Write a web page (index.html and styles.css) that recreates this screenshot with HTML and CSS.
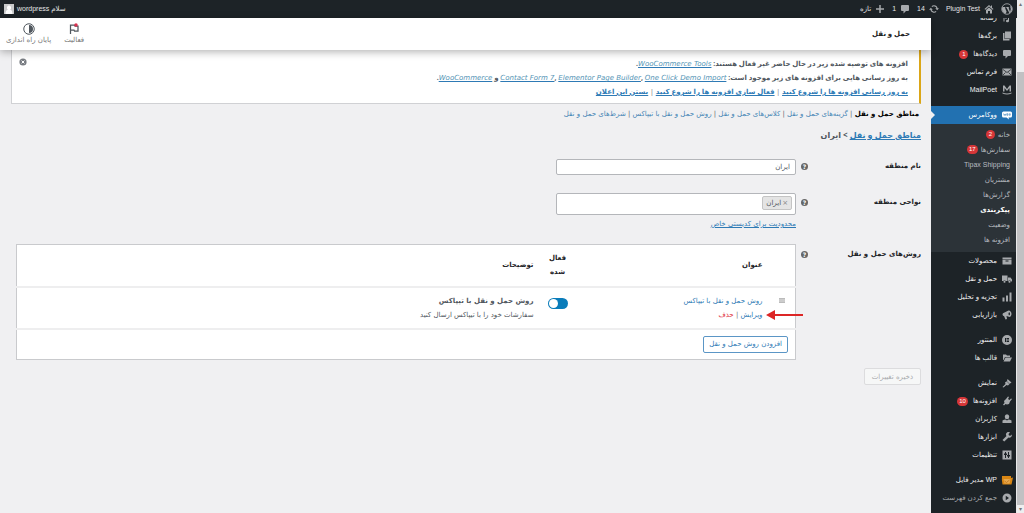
FILE: index.html
```html
<!DOCTYPE html>
<html lang="fa" dir="rtl">
<head>
<meta charset="utf-8">
<title>حمل و نقل</title>
<link rel="stylesheet" href="styles.css">
</head>
<body>
<div class="screen">
  <div class="scrollbar" aria-hidden="true"><span class="sb-arrow">▴</span><span class="sb-thumb"></span><span class="sb-arrow">▾</span></div>
  <div class="app">
    <header class="adminbar">
      <svg class="ic logo" viewBox="0 0 20 20"><circle cx="10" cy="10" r="8.8" fill="none" stroke="currentColor" stroke-width="1.4"/><path d="M2.500 6.500h5v1H6.600l2.600 7.500 1.300-4-1.200-3.500h-1v-1h5.200v1h-1l2.500 7.500 1.200-4c.6-2-.6-3-.9-4.200-.2-1 .5-1.800 1.400-1.800A8 8 0 0 1 14 17.200L10.600 10 8 17.800A8 8 0 0 1 2.500 6.500z"/></svg>
      <a href="#" class="site"><svg class="ic" viewBox="0 0 20 20"><path d="M10 2 1 10l1.500 1.500L10 5l7.500 6.500L19 10l-3-2.700V3h-2v2.500zM4 12v7h4v-5h4v5h4v-7l-6-5z"/></svg>Plugin Test</a>
      <a href="#"><svg class="ic" viewBox="0 0 20 20"><path d="M10 2.500a7.500 7.500 0 0 1 7.300 5.800H20l-3.700 4.200-3.800-4.200h2.400A5.200 5.200 0 0 0 6.500 6L5 4.300a7.500 7.500 0 0 1 5-1.800zM3.700 7.500 7.500 11.700H5.100A5.200 5.200 0 0 0 13.500 14l1.500 1.700A7.500 7.500 0 0 1 2.700 11.700H0z"/></svg>14</a>
      <a href="#"><svg class="ic" viewBox="0 0 20 20"><path d="M4 2h12a2 2 0 0 1 2 2v8a2 2 0 0 1-2 2h-4l-5 5v-5H4a2 2 0 0 1-2-2V4a2 2 0 0 1 2-2z"/></svg>1</a>
      <a href="#"><svg class="ic" viewBox="0 0 20 20"><path d="M8.500 2h3v6.500H18v3h-6.500V18h-3v-6.500H2v-3h6.500z"/></svg>تازه</a>
      <a href="#" class="user">سلام wordpress<svg class="avatar" viewBox="0 0 10 10"><path fill="#c9cacb" d="M0 0h10v10H0z"/><path fill="#fff" d="M5 1.500a2 2.300 0 0 1 1.200 4.200C8 6.200 8.500 7.500 8.500 10h-7c0-2.500.5-3.800 2.300-4.300A2 2.300 0 0 1 5 1.500z"/></svg></a>
    </header>
    <div class="body">
      <nav class="sidebar">
        <ul class="menu">
          <li><a href="#"><svg class="ic" viewBox="0 0 20 20"><path d="M2 3h8v8H2zM12 6h6v2h-4v8a3 2.500 0 1 1-2-2.400zM3 12h2v5H3z"/></svg>رسانه</a></li>
          <li><a href="#"><svg class="ic" viewBox="0 0 20 20"><path d="M6 1h12v14H6zM2 4h3v12h10v3H2z"/></svg>برگه‌ها</a></li>
          <li><a href="#"><svg class="ic" viewBox="0 0 20 20"><path d="M4 2h12a2 2 0 0 1 2 2v8a2 2 0 0 1-2 2h-4l-5 5v-5H4a2 2 0 0 1-2-2V4a2 2 0 0 1 2-2z"/></svg>دیدگاه‌ها<span class="count">1</span></a></li>
          <li><a href="#"><svg class="ic" viewBox="0 0 20 20"><path d="M1 3h18v14H1z"/><path d="m2 5 8 6 8-6M2 16l5-5m11 5-5-5" fill="none" stroke="#1d2327" stroke-width="1.500"/></svg>فرم تماس</a></li>
          <li><a href="#"><svg class="ic" viewBox="0 0 20 20"><path d="M2 13V1h3l5 7 5-7h3v12h-3V6l-5 6-5-6v7zM1 15q9 4 18 0v2q-9 4-18 0z"/></svg>MailPoet</a></li>
          <li class="gap current"><a href="#"><svg class="ic" viewBox="0 0 20 20"><path d="M3 3h14a3 3 0 0 1 3 3v6a3 3 0 0 1-3 3h-4l1 4-5-4H3a3 3 0 0 1-3-3V6a3 3 0 0 1 3-3z"/><path d="m3 7 1.500 4L6 8l1.500 3L8.500 7M10 7.500h2v3h-2zM14.500 7.500h2v3h-2z" fill="none" stroke="#2271b1"/></svg>ووکامرس</a>
            <ul class="submenu">
              <li><a href="#">خانه<span class="count">2</span></a></li>
              <li><a href="#">سفارش‌ها<span class="count">17</span></a></li>
              <li><a href="#">Tipax Shipping</a></li>
              <li><a href="#">مشتریان</a></li>
              <li><a href="#">گزارش‌ها</a></li>
              <li><a href="#" class="on">پیکربندی</a></li>
              <li><a href="#">وضعیت</a></li>
              <li><a href="#">افزونه ها</a></li>
            </ul>
          </li>
          <li><a href="#"><svg class="ic" viewBox="0 0 20 20"><path d="M1 3h18v4H1zM1 8h18v9H1zm6 1v2h6V9z" fill-rule="evenodd"/></svg>محصولات</a></li>
          <li><a href="#"><svg class="ic" viewBox="0 0 20 20"><path d="M0 3h11v11H0zM12 7h5l3 4v4h-8z"/><circle cx="5" cy="15.500" r="2.500" stroke="#1d2327"/><circle cx="15" cy="15.500" r="2.500" stroke="#1d2327"/></svg>حمل و نقل</a></li>
          <li><a href="#"><svg class="ic" viewBox="0 0 20 20"><path d="M1 11h4v8H1zM8 7h4v12H8zM15 1h4v18h-4z"/></svg>تجزیه و تحلیل</a></li>
          <li><a href="#"><svg class="ic" viewBox="0 0 20 20"><path d="M13 1c4 0 6 4 6 7s-2 6-4 6L9 12l1 6-3 1-3-7c-3 0-4-5-1-6z"/><ellipse cx="14.500" cy="7.500" rx="1.500" ry="3" fill="#1d2327"/></svg>بازاریابی</a></li>
          <li class="gap"><a href="#"><svg class="ic" viewBox="0 0 20 20"><path fill-rule="evenodd" d="M10 0a10 10 0 1 0 0 20 10 10 0 0 0 0-20zM6 6h2v8H6zm3 0h5v2H9zm0 3h5v2H9zm0 3h5v2H9z"/></svg>المنتور</a></li>
          <li><a href="#"><svg class="ic" viewBox="0 0 20 20"><path d="M2 3h6l2 2h6v3H6l-3 6H2zM7 9h13l-4 8H3z"/></svg>قالب ها</a></li>
          <li class="gap"><a href="#"><svg class="ic" viewBox="0 0 20 20"><path d="m11 2 8 7-3 2-4 4-3-1-6 5-2-1 6-6-1-3 4-3z"/><path d="m9 6 6 6" stroke="#1d2327"/></svg>نمایش</a></li>
          <li><a href="#"><svg class="ic" viewBox="0 0 20 20"><path d="m12 1 2 1-2 4 3 2 3-3 2 1-4 5-2 5-4 1-3-1-3 3-2-2 3-3-1-4 4-4z"/></svg>افزونه‌ها<span class="count">10</span></a></li>
          <li><a href="#"><svg class="ic" viewBox="0 0 20 20"><ellipse cx="10" cy="5.500" rx="4.500" ry="5"/><path d="M1 18v-5q3-2 6-2l3 2 3-2q3 0 6 2v5z"/></svg>کاربران</a></li>
          <li><a href="#"><svg class="ic" viewBox="0 0 20 20"><path d="M16 1 13 4l1 3 3 .5L19.500 5a5 5 0 0 1-6.500 6L4.500 19 1 16l8-8a5 5 0 0 1 7-7z"/></svg>ابزارها</a></li>
          <li><a href="#"><svg class="ic" viewBox="0 0 20 20"><path fill-rule="evenodd" d="M1 1h18v18H1zm5 3v3H4v3h2v6h2v-6h2V7H8V4zm6 0v6h-2v3h2v3h2v-3h2v-3h-2V4z"/></svg>تنظیمات</a></li>
          <li class="gap"><a href="#"><svg class="ic wide" viewBox="0 0 24 20"><path d="M2 2h18v4l4-1-3 14H3q-2-8-1-17z" fill="#d98613"/><path d="M5 8h14l-2 9H7z" fill="#e9a84c"/><path d="m7 12 4 3 6-5" fill="none" stroke="#b5701c" stroke-width="1.500"/></svg>WP مدیر فایل</a></li>
          <li class="collapse"><button type="button"><svg class="ic" viewBox="0 0 20 20"><path fill-rule="evenodd" d="M10 1a9 9 0 1 0 0 18 9 9 0 0 0 0-18zM7.500 5.500 14 10l-6.500 4.500z"/></svg>جمع کردن فهرست</button></li>
        </ul>
      </nav>
      <main class="main">
        <div class="topbar">
          <h1>حمل و نقل</h1>
          <div class="tools">
            <button type="button"><svg class="tool" viewBox="0 0 24 24"><path d="M5 22V4h8l1 2h6v10h-7l-1-2H6" fill="none" stroke="#50575e" stroke-width="2.500"/><circle cx="16" cy="4" r="3.500" fill="#d9304f"/></svg>فعالیت</button>
            <button type="button"><svg class="tool" viewBox="0 0 24 24"><circle cx="12" cy="12" r="10.500" fill="none" stroke="#50575e" stroke-width="2"/><path d="M12 4a8 8 0 0 1 0 16z" fill="#50575e"/></svg>پایان راه اندازی</button>
          </div>
        </div>
        <div class="content">
          <section class="notice">
            <div>
              <p>افزونه های توصیه شده زیر در حال حاضر غیر فعال هستند: <a href="#"><em>WooCommerce Tools</em></a>.</p>
              <p>به روز رسانی هایی برای افزونه های زیر موجود است: <span dir="ltr"><a href="#"><em>Contact Form 7</em></a>, <a href="#"><em>Elementor Page Builder</em></a>, <a href="#"><em>One Click Demo Import</em></a></span> و <a href="#"><em>WooCommerce</em></a>.</p>
              <p><a href="#">به روز رسانی افزونه ها را شروع کنید</a> <i class="bar">|</i> <a href="#">فعال سازی افزونه ها را شروع کنید</a> <i class="bar">|</i> <a href="#">بستن این اعلان</a></p>
            </div>
            <button type="button" class="dismiss" aria-label="بستن"><svg viewBox="0 0 20 20"><circle cx="10" cy="10" r="9" fill="#787c82"/><path d="m6.500 6.500 7 7m0-7-7 7" stroke="#fff" stroke-width="2.500"/></svg></button>
          </section>
          <nav class="tabs"><a href="#" class="on">مناطق حمل و نقل</a> | <a href="#">گزینه‌های حمل و نقل</a> | <a href="#">کلاس‌های حمل و نقل</a> | <a href="#">روش حمل و نقل با تیپاکس</a> | <a href="#">شرط‌های حمل و نقل</a></nav>
          <h2><a href="#">مناطق حمل و نقل</a> &gt; ایران</h2>
          <form class="form">
            <div class="row row-name">
              <label for="zone">نام منطقه</label>
              <span class="help">?</span>
              <input id="zone" class="text" type="text" value="ایران">
            </div>
            <div class="row row-regions">
              <label for="regions">نواحی منطقه</label>
              <span class="help">?</span>
              <div>
                <div class="tagbox"><span class="tag"><button type="button" aria-label="حذف ایران">×</button>ایران</span><input id="regions" type="text"></div>
                <a class="limit" href="#">محدودیت برای کدپستی خاص</a>
              </div>
            </div>
            <div class="row row-methods">
              <span class="lbl">روش‌های حمل و نقل</span>
              <span class="help">?</span>
              <table class="methods">
                <colgroup><col class="c-sort"><col class="c-title"><col class="c-on"><col></colgroup>
                <thead><tr><th></th><th>عنوان</th><th class="mid">فعال شده</th><th>توضیحات</th></tr></thead>
                <tbody><tr>
                  <td><span class="grip"></span></td>
                  <td><a href="#">روش حمل و نقل با تیپاکس</a>
                    <div class="actions"><a href="#">ویرایش</a> <i class="bar">|</i> <a href="#" class="del">حذف</a>
                      <svg class="arrow" viewBox="0 0 37 12"><path d="M0 6 9 1v4h28v2H9v4z" fill="#dc2626"/></svg></div></td>
                  <td class="mid"><label class="switch"><input type="checkbox" checked aria-label="فعال شده"><span></span></label></td>
                  <td><strong>روش حمل و نقل با تیپاکس</strong><div class="desc">سفارشات خود را با تیپاکس ارسال کنید</div></td>
                </tr></tbody>
                <tfoot><tr><td colspan="4"><button type="button" class="add">افزودن روش حمل و نقل</button></td></tr></tfoot>
              </table>
            </div>
            <button type="submit" class="save" disabled>ذخیره تغییرات</button>
          </form>
        </div>
      </main>
    </div>
  </div>
</div>
</body>
</html>
```
FILE: styles.css
```css
* { box-sizing: border-box; }
body { margin: 0; background: #f0f0f2; color: #50575e; font: 7px/14px "DejaVu Sans", sans-serif; }
button, input { font: inherit; color: inherit; margin: 0; padding: 0; border: 0; background: none; }
a { color: #2e7ab5; }
ul { margin: 0; padding: 0; list-style: none; }
h1, h2, p { margin: 0; }
svg { display: block; flex: none; }
.screen { display: flex; height: 100vh; overflow: hidden; }
.app { flex: 1; min-width: 0; display: flex; flex-direction: column; }
.scrollbar { width: 7px; display: flex; flex-direction: column; background: #eeeeef; color: #777; font-size: 6px; line-height: 8px; text-align: center; }
.sb-thumb { flex: 1; margin-top: 64px; background: #c1c1c3; }
.ic { width: 10px; height: 10px; fill: currentColor; }

.adminbar, .sidebar { font-family: "Liberation Sans", "DejaVu Sans", sans-serif; }
.adminbar { display: flex; align-items: center; gap: 7px; height: 18px; padding: 0 4px; background: #1d2327; color: #c3c4c7; flex: none; }
.adminbar a { display: flex; align-items: center; gap: 4px; color: #e4e5e6; text-decoration: none; }
.adminbar .ic { color: #a7aaad; }
.adminbar .logo { width: 12px; height: 12px; }
.adminbar .user { margin-right: auto; gap: 3px; }
.avatar { width: 10px; height: 10px; }

.body { flex: 1; min-height: 0; display: flex; }
.sidebar { width: 86px; flex: none; overflow: hidden; background: #1d2327; border-right: 1px solid #e8e8e9; }
.menu { margin-top: -9px; }
.menu a, .collapse button { display: flex; align-items: center; gap: 5px; height: 18px; padding: 0 4px; color: #f0f0f1; text-decoration: none; white-space: nowrap; }
.menu .ic { color: #a7aaad; }
.menu .wide { width: 12px; margin-right: -1px; margin-left: -1px; }
.menu .gap { margin-top: 7px; }
.current > a { position: relative; background: #2271b1; color: #fff; }
.current > a::after { content: ""; position: absolute; left: 0; top: 5px; border: 4px solid transparent; border-left-color: #f0f0f1; }
.menu .current .ic { color: #fff; }
.submenu { padding: 3px 0 5px; background: #2c3338; }
.menu .submenu a { gap: 3px; height: 15px; padding: 0 6px; color: #b8bcc0; }
.menu .submenu .on { color: #fff; font-weight: bold; }
.count { min-width: 9px; height: 9px; padding: 0 2px; border-radius: 5px; background: #d63638; color: #fff; font-size: 6px; line-height: 9px; text-align: center; }
.collapse button { color: #a7aaad; }

.main { flex: 1; min-width: 0; }
.topbar { position: relative; z-index: 1; display: flex; align-items: center; justify-content: space-between; height: 32px; padding: 0 21px 0 6px; background: #fff; box-shadow: 0 2px 8px rgba(0, 0, 0, .3); }
.topbar h1, .notice, h2 { font-family: "Noto Sans", "DejaVu Sans", sans-serif; }
.topbar h1 { font-size: 7px; color: #1e1e1e; }
.tools { display: flex; gap: 13px; }
.tools button { display: flex; flex-direction: column; align-items: center; color: #757575; line-height: 10px; }
.tool { width: 12px; height: 12px; }
.content { padding: 0 10px 0 11px; }
.notice { display: flex; justify-content: space-between; align-items: flex-start; padding: 7px 11px 4px 7px; border: 1px solid #d0d1d4; border-top: 0; border-right: 2px solid #dba617; background: #fff; font-weight: bold; }
.notice em { font-family: "DejaVu Sans", sans-serif; font-weight: normal; color: #5494b5; }
.bar { font-style: normal; font-weight: normal; color: #777; }
.dismiss svg { width: 8px; height: 8px; margin-top: 1px; }
.tabs { margin-top: 3px; padding-right: 2px; color: #646970; }
.tabs a { color: #4585b5; text-decoration: none; }
.tabs .on { color: #000; font-weight: bold; }
h2 { margin-top: 7px; font-size: 8px; line-height: 14px; }
.form { padding-left: 5px; }
.row { display: grid; grid-template-columns: 113px 12px minmax(0, 1fr); }
.row > label, .lbl { font-weight: bold; color: #1d2327; }
.help { width: 7px; height: 7px; margin-top: 4px; border-radius: 50%; background: #666; color: #fff; font-size: 6px; line-height: 7px; font-weight: bold; text-align: center; }
.text, .tagbox { width: 240px; border: 1px solid #b4b6ba; border-radius: 2px; background: #fff; }
.row-name { margin-top: 17px; }
.text { height: 16px; padding: 0 5px; }
.row-regions { margin-top: 18px; }
.row-regions > label { padding-top: 2px; }
.row-regions .help { margin-top: 6px; }
.tagbox { display: flex; height: 22px; padding: 2px 3px; }
.tagbox input { flex: 1; min-width: 0; outline: 0; }
.tag { display: flex; align-items: center; gap: 1px; height: 14px; padding: 0 3px; border: 1px solid #c4c4c4; border-radius: 2px; background: #e4e4e4; }
.tag button { color: #888; }
.limit { display: block; margin-top: 2px; }
.row-methods { margin-top: 13px; }
.row-methods .lbl { padding-top: 3px; }
.row-methods .help { margin-top: 7px; }
.methods { width: 100%; table-layout: fixed; border-collapse: collapse; border: 1px solid #c9cacd; background: #fff; }
.c-sort { width: 24px; }
.c-title { width: 196px; }
.c-on { width: 36px; }
.methods th, .methods td { padding: 6px 7px; text-align: right; vertical-align: top; }
.methods th { height: 42px; vertical-align: middle; color: #1d2327; }
.methods td { height: 42px; }
.methods tfoot td { height: 31px; }
.methods .mid { padding-left: 2px; padding-right: 2px; text-align: center; }
.methods tr > :nth-child(2) { padding-right: 9px; }
.methods tr > :nth-child(4) { padding-right: 6px; }
.methods tbody tr, .methods tfoot tr { border-top: 2px solid #eeeeef; }
.methods td a { text-decoration: none; }
.methods .del { color: #e0303c; }
.grip { display: block; width: 6px; height: 5px; margin: 4px 3px 0; border: solid #bbb; border-width: 1px 0; background: #ccc; }
.actions { position: relative; }
.arrow { position: absolute; right: -40px; top: 1px; width: 37px; height: 12px; }
.switch { display: inline-block; position: relative; width: 20px; height: 11px; vertical-align: top; margin-top: 4px; }
.switch input { position: absolute; inset: 0; opacity: 0; }
.switch span { display: block; height: 11px; padding: 1px; border-radius: 6px; background: #0a7cba; }
.switch span::after { content: ""; display: block; width: 9px; height: 9px; margin-right: auto; border-radius: 50%; background: #fff; }
.add { display: block; height: 17px; padding: 0 5px; border: 1px solid #5b96c6; border-radius: 2px; color: #2e7ab5; }
.save { height: 17px; margin-top: 8px; padding: 0 7px; border: 1px solid #dcdcde; border-radius: 2px; background: #f6f7f7; color: #a7aaad; }
```
